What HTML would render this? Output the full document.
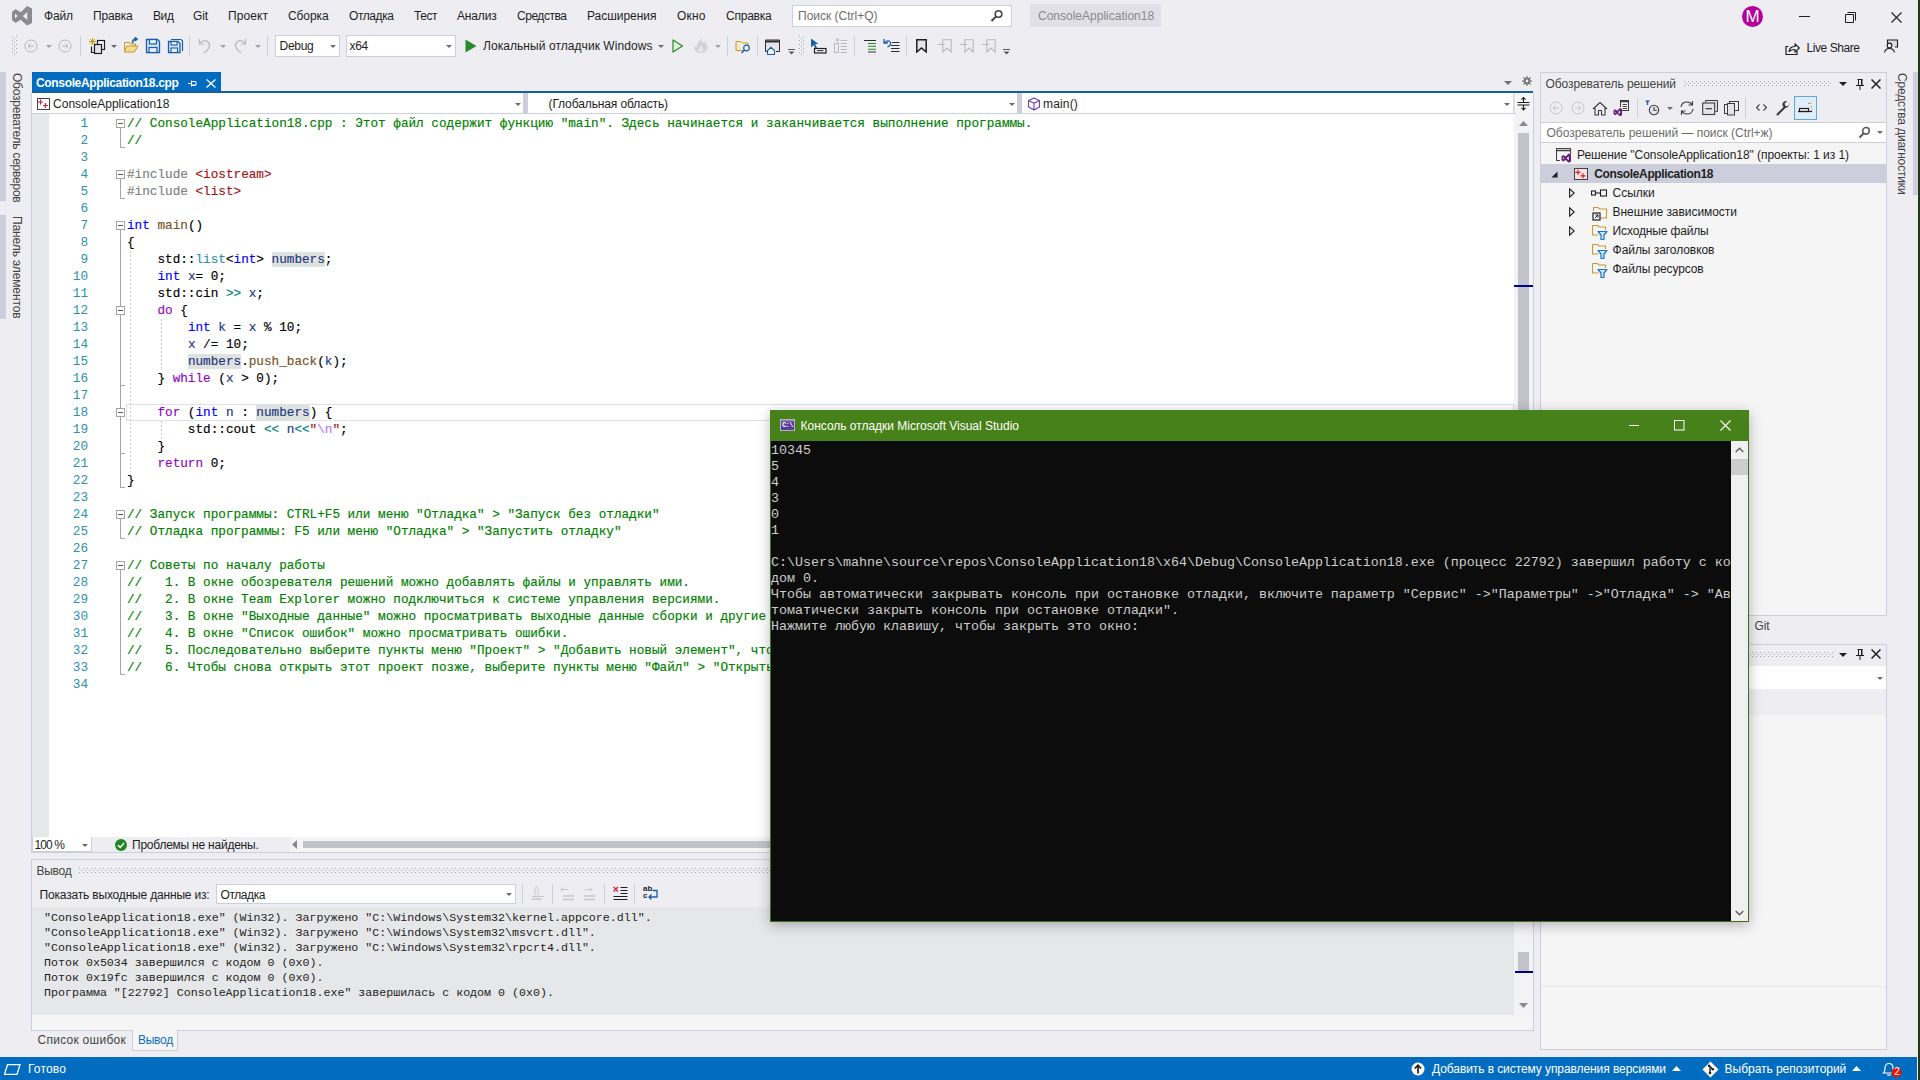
<!DOCTYPE html><html lang="ru"><head><meta charset="utf-8"><title>ConsoleApplication18 - Microsoft Visual Studio</title><style>
*{box-sizing:border-box}
html,body{margin:0;padding:0}
body{width:1920px;height:1080px;overflow:hidden;background:#eeeef2;position:relative;
 font:12px "Liberation Sans",sans-serif;color:#1e1e1e}
.a{position:absolute}
.t{position:absolute;white-space:pre;line-height:16px;height:16px}
.mono{font-family:"Liberation Mono",monospace}
.code{position:absolute;left:127px;white-space:pre;font:12.7px/17px "Liberation Mono",monospace;height:17px;color:#000;letter-spacing:-0.006px;-webkit-text-stroke:0.16px currentColor}
.ln{position:absolute;left:40px;width:48px;text-align:right;font:12.7px/17px "Liberation Mono",monospace;height:17px;color:#2b91af}
.c{color:#008000}.k{color:#0000ff}.p{color:#8f08c4}.s{color:#a31515}.g{color:#808080}.f{color:#74531f}.ty{color:#2b91af}.v{color:#1f377f}.e{color:#b776fb}.op{color:#008080}
.hl{background:#dfe3df}
.out{position:absolute;left:44px;white-space:pre;font:11.65px/15px "Liberation Mono",monospace;height:15px;color:#1e1e1e}
.con{position:absolute;left:771px;white-space:pre;font:13.33px/16px "Liberation Mono",monospace;height:16px;color:#cccccc}
.vt{position:absolute;writing-mode:vertical-rl;white-space:pre;font-size:12px;line-height:14px;color:#444}
</style></head><body>
<div class="t" style="left:44px;top:8px;color:#1e1e1e;letter-spacing:-0.129px;">Файл</div>
<div class="t" style="left:93px;top:8px;color:#1e1e1e;letter-spacing:-0.174px;">Правка</div>
<div class="t" style="left:153px;top:8px;color:#1e1e1e;letter-spacing:-0.406px;">Вид</div>
<div class="t" style="left:193px;top:8px;color:#1e1e1e;letter-spacing:-0.115px;">Git</div>
<div class="t" style="left:228px;top:8px;color:#1e1e1e;letter-spacing:0.078px;">Проект</div>
<div class="t" style="left:288px;top:8px;color:#1e1e1e;letter-spacing:-0.096px;">Сборка</div>
<div class="t" style="left:349px;top:8px;color:#1e1e1e;letter-spacing:-0.420px;">Отладка</div>
<div class="t" style="left:414px;top:8px;color:#1e1e1e;letter-spacing:-0.457px;">Тест</div>
<div class="t" style="left:457px;top:8px;color:#1e1e1e;letter-spacing:-0.169px;">Анализ</div>
<div class="t" style="left:517px;top:8px;color:#1e1e1e;letter-spacing:-0.459px;">Средства</div>
<div class="t" style="left:587px;top:8px;color:#1e1e1e;letter-spacing:-0.030px;">Расширения</div>
<div class="t" style="left:677px;top:8px;color:#1e1e1e;letter-spacing:0.152px;">Окно</div>
<div class="t" style="left:726px;top:8px;color:#1e1e1e;letter-spacing:-0.225px;">Справка</div>
<div class="a" style="left:792px;top:5px;width:220px;height:22px;background:#ffffff;border:1px solid #cccedb;"></div>
<div class="t" style="left:798px;top:8px;color:#6d6d6d;">Поиск (Ctrl+Q)</div>
<div class="a" style="left:1030px;top:4px;width:131px;height:23px;background:#e0e0e6;"></div>
<div class="t" style="left:1038px;top:8px;color:#8a8a8a;">ConsoleApplication18</div>
<div class="a" style="left:1742px;top:5.500px;width:21px;height:21px;border-radius:11px;background:#b4009e;color:#fff;font-size:17px;line-height:22px;text-align:center">M</div>
<div class="t" style="left:1806.5px;top:40px;color:#1e1e1e;letter-spacing:-0.438px;">Live Share</div>
<svg class="a" style="left:12px;top:6px" width="20" height="20" viewBox="0 0 20 20"><path fill-rule="evenodd" d="M0 6L3.500 3 8.750 6.200 15 0 20 2.500V17L15 19.500 8.750 13.800 3.500 17 0 14zM3 7.600V12.400L5.600 10zM15.300 6V14L10.800 10z" fill="#8b8b92"/></svg>
<svg class="a" style="left:1799px;top:16px" width="11" height="1" viewBox="0 0 11 1"><rect width="11" height="1" fill="#1e1e1e"/></svg>
<svg class="a" style="left:1845px;top:12px" width="11" height="11" viewBox="0 0 11 11"><path d="M2.5 0.5h8v8M0.5 2.5h8v8h-8z" fill="none" stroke="#1e1e1e" stroke-width="1"/></svg>
<svg class="a" style="left:1891px;top:12px" width="11" height="11" viewBox="0 0 11 11"><path d="M0.5 0.5l10 10M10.5 0.5l-10 10" stroke="#1e1e1e" stroke-width="1.1" fill="none"/></svg>
<svg class="a" style="left:990px;top:9px" width="14" height="14" viewBox="0 0 14 14"><circle cx="8.5" cy="5" r="3.3" fill="none" stroke="#424242" stroke-width="1.6"/><path d="M6 7.6L1.5 12" stroke="#424242" stroke-width="2"/></svg>
<svg class="a" style="left:1785px;top:41px" width="16" height="15" viewBox="0 0 16 15"><path d="M3.5 5.5h-2.5v8h11v-3.5" fill="none" stroke="#1e1e1e" stroke-width="1.2"/><path d="M4 10.5c0.5-3.5 2.5-5 6-5v-2.7l4.3 4.2-4.3 4.2v-2.7c-2.5 0-4.500.5-6 2z" fill="none" stroke="#1e1e1e" stroke-width="1.1" stroke-linejoin="round"/></svg>
<svg class="a" style="left:1883px;top:38px" width="16" height="16" viewBox="0 0 16 16"><path d="M4.5 5.500v-3.500h10v7h-2.500" fill="#dcdce2" stroke="#1e1e1e" stroke-width="1.1"/><circle cx="6.5" cy="7.500" r="2.400" fill="#eeeef2" stroke="#1e1e1e" stroke-width="1.1"/><path d="M1.500 14.500c0.600-3 2.600-4 5-4s4.400 1 5 4" fill="none" stroke="#1e1e1e" stroke-width="1.1"/></svg>
<div class="a" style="left:12px;top:36px;width:5px;height:19px;background-image:radial-gradient(circle at 0.5px 0.5px,#a0a3b4 0.6px,transparent 0.7px),radial-gradient(circle at 0.5px 0.5px,#a0a3b4 0.6px,transparent 0.7px);background-size:4px 4px;background-position:0 0,2px 2px"></div>
<svg class="a" style="left:24px;top:38.5px" width="14" height="14" viewBox="0 0 14 14"><g transform="translate(7,7)"><circle r="6" fill="none" stroke="#b8b8c0" stroke-width="1"/><path d="M-3 0h6M-3 0l2.500-2.500M-3 0l2.500 2.500" stroke="#b8b8c0" stroke-width="1" fill="none"/></g></svg>
<svg class="a" style="left:46.0px;top:44.5px" width="6" height="4"><path d="M0 0h6l-3.0 3.0z" fill="#a0a0a8"/></svg>
<svg class="a" style="left:58px;top:38.5px" width="14" height="14" viewBox="0 0 14 14"><g transform="translate(7,7)"><circle r="6" fill="none" stroke="#b8b8c0" stroke-width="1"/><path d="M3 0h-6M3 0l-2.500-2.500M3 0l-2.500 2.500" stroke="#b8b8c0" stroke-width="1" fill="none"/></g></svg>
<div class="a" style="left:80px;top:36px;width:1px;height:20px;background:#cccedb;"></div>
<svg class="a" style="left:88px;top:37px" width="18" height="18" viewBox="0 0 18 18"><path d="M4.500 1v7M1 4.500h7M2 2l5 5M7 2l-5 5" stroke="#c9a41c" stroke-width="1"/><path d="M3.500 9.500v6h4" fill="none" stroke="#1e1e1e" stroke-width="1.200"/><rect x="9.500" y="3.500" width="7" height="9" fill="#f5f5f5" stroke="#1e1e1e" stroke-width="1.200"/><rect x="6.500" y="7.500" width="7" height="9" fill="#e4e4ea" stroke="#1e1e1e" stroke-width="1.200"/></svg>
<svg class="a" style="left:111.0px;top:44.5px" width="6" height="4"><path d="M0 0h6l-3.0 3.0z" fill="#6b6b6b"/></svg>
<svg class="a" style="left:123px;top:37px" width="17" height="17" viewBox="0 0 17 17"><path d="M1.500 5.500h5l1.500 1.500h4.500v2" fill="#f3dc9a" stroke="#c79a2f" stroke-width="1"/><path d="M1.500 5.500v9.500h10l3.500-6h-11l-2.500 5" fill="#f3dc9a" stroke="#c79a2f" stroke-width="1"/><path d="M9.500 6c0-3 1.500-4 4-4M11.500 0.500l2.500 1.500-2 2" fill="none" stroke="#1a5fa8" stroke-width="1.600"/></svg>
<svg class="a" style="left:145px;top:38px" width="16" height="16" viewBox="0 0 16 16"><path d="M1.500 1.500h11l2 2v11h-13z" fill="#cfe6fb" stroke="#1a5fa8" stroke-width="1.300"/><rect x="4.500" y="1.500" width="7" height="4.500" fill="#eeeef2" stroke="#1a5fa8" stroke-width="1.200"/><rect x="4" y="9.500" width="8" height="5" fill="#eeeef2" stroke="#1a5fa8" stroke-width="1.200"/></svg>
<svg class="a" style="left:167px;top:38px" width="17" height="16" viewBox="0 0 17 16"><path d="M4 1.500h10l1.500 1.500v10" fill="none" stroke="#1a5fa8" stroke-width="1.200"/><path d="M1.500 3.500h9.500l2 2v9h-11.500z" fill="#cfe6fb" stroke="#1a5fa8" stroke-width="1.300"/><rect x="4" y="3.500" width="6" height="3.500" fill="#eeeef2" stroke="#1a5fa8" stroke-width="1.100"/><rect x="4" y="10" width="6.500" height="4.500" fill="#eeeef2" stroke="#1a5fa8" stroke-width="1.100"/></svg>
<div class="a" style="left:189px;top:36px;width:1px;height:20px;background:#cccedb;"></div>
<svg class="a" style="left:198px;top:38px" width="14" height="16" viewBox="0 0 14 16"><path d="M1.500 1v5h5" fill="none" stroke="#b8b8c0" stroke-width="1.200"/><path d="M1.500 6c2-3.500 6.500-4.500 9-1.500s0.500 7-4.500 10.500" fill="none" stroke="#b8b8c0" stroke-width="1.200"/></svg>
<svg class="a" style="left:220.0px;top:44.5px" width="6" height="4"><path d="M0 0h6l-3.0 3.0z" fill="#a0a0a8"/></svg>
<svg class="a" style="left:233px;top:38px" width="14" height="16" viewBox="0 0 14 16"><path d="M12.500 1v5h-5" fill="none" stroke="#b8b8c0" stroke-width="1.200"/><path d="M12.500 6c-2-3.500-6.500-4.500-9-1.500s-0.500 7 4.500 10.500" fill="none" stroke="#b8b8c0" stroke-width="1.200"/></svg>
<svg class="a" style="left:255.0px;top:44.5px" width="6" height="4"><path d="M0 0h6l-3.0 3.0z" fill="#a0a0a8"/></svg>
<div class="a" style="left:267px;top:36px;width:1px;height:20px;background:#cccedb;"></div>
<div class="a" style="left:275px;top:35px;width:65px;height:22px;background:#ffffff;border:1px solid #cccedb;"></div>
<div class="t" style="left:279.5px;top:38px;letter-spacing:-0.275px;">Debug</div>
<svg class="a" style="left:330.0px;top:44.5px" width="6" height="4"><path d="M0 0h6l-3.0 3.0z" fill="#6b6b6b"/></svg>
<div class="a" style="left:346px;top:35px;width:110px;height:22px;background:#ffffff;border:1px solid #cccedb;"></div>
<div class="t" style="left:349.5px;top:38px;letter-spacing:-0.286px;">x64</div>
<svg class="a" style="left:446.0px;top:44.5px" width="6" height="4"><path d="M0 0h6l-3.0 3.0z" fill="#6b6b6b"/></svg>
<svg class="a" style="left:465px;top:39px" width="12" height="14" viewBox="0 0 12 14"><path d="M0.500 0.500v13l11-6.500z" fill="#2a8a2a"/></svg>
<div class="t" style="left:483px;top:38px;letter-spacing:0.064px;">Локальный отладчик Windows</div>
<svg class="a" style="left:658.0px;top:44.5px" width="6" height="4"><path d="M0 0h6l-3.0 3.0z" fill="#6b6b6b"/></svg>
<svg class="a" style="left:672px;top:39px" width="12" height="14" viewBox="0 0 12 14"><path d="M1 1v12l9.500-6z" fill="#e2f0e0" stroke="#2a8a2a" stroke-width="1.200" stroke-linejoin="round"/></svg>
<svg class="a" style="left:693px;top:37px" width="17" height="17" viewBox="0 0 17 17"><path d="M7.500 16c-4.500 0-7-3.500-5.500-7.500 0.500 1.200 1 1.800 2 2-0.800-4 1.500-6.500 5-9-0.500 2.500 0.500 3.500 1.500 4.800 0.300-1 1-1.800 2.200-2.300-0.500 2 0.800 3.200 1.500 5 1.300 3.500-1.200 7-6.700 7z" fill="#d2d2d9"/><path d="M7.800 15c-2 0-3.300-1.500-2.800-3.300 0.500 0.500 0.800 0.700 1.300 0.700-0.300-2 0.700-3.200 2.300-4.400-0.200 1.500 0.500 2.200 1.200 3.200 1 1.500 0.300 3.800-2 3.800z" fill="#e6e6ec"/></svg>
<svg class="a" style="left:715.0px;top:44.5px" width="6" height="4"><path d="M0 0h6l-3.0 3.0z" fill="#a0a0a8"/></svg>
<div class="a" style="left:727px;top:36px;width:1px;height:20px;background:#cccedb;"></div>
<svg class="a" style="left:735px;top:39px" width="17" height="15" viewBox="0 0 17 15"><path d="M1 2.500h5l1.500 1.500h5.500v4M1 2.500v9h7" fill="#f7e7b8" stroke="#c79a2f" stroke-width="1"/><circle cx="11.500" cy="9" r="2.800" fill="#eef6ff" stroke="#1a5fa8" stroke-width="1.200"/><path d="M9.500 11l-3 3" stroke="#1a5fa8" stroke-width="1.500"/></svg>
<div class="a" style="left:757px;top:36px;width:1px;height:20px;background:#cccedb;"></div>
<svg class="a" style="left:765px;top:39px" width="16" height="16" viewBox="0 0 16 16"><path d="M4 12.500h-3.500v-11.500h14v11.500h-3.500" fill="#e4e4ea" stroke="#2e2e2e" stroke-width="1"/><path d="M0.500 2.500h14" stroke="#2e2e2e" stroke-width="2"/><path d="M2.500 11.500l3.500-3.200 3.500 3.200v4h-7z" fill="#eef6ff" stroke="#1a5fa8" stroke-width="1.100"/></svg>
<svg class="a" style="left:788px;top:49px" width="7" height="6" viewBox="0 0 7 6"><rect x="0" y="0" width="7" height="1" fill="#5a5a5a"/><path d="M0.500 2.500h6l-3 3z" fill="#5a5a5a"/></svg>
<div class="a" style="left:799px;top:36px;width:5px;height:19px;background-image:radial-gradient(circle at 0.5px 0.5px,#a0a3b4 0.6px,transparent 0.7px),radial-gradient(circle at 0.5px 0.5px,#a0a3b4 0.6px,transparent 0.7px);background-size:4px 4px;background-position:0 0,2px 2px"></div>
<svg class="a" style="left:810px;top:38px" width="17" height="16" viewBox="0 0 17 16"><path d="M1 0.500v9l2.500-2.500 2 3.500 1.500-1-2-3.500h3.500z" fill="#1a5fa8"/><rect x="4.500" y="10.500" width="11.500" height="4.500" fill="#f5f5f5" stroke="#1e1e1e" stroke-width="1.200"/><path d="M7 12.700h6.500" stroke="#1e1e1e" stroke-width="1"/></svg>
<svg class="a" style="left:833px;top:38px" width="15" height="16" viewBox="0 0 15 16"><path d="M4.500 0v4M2.500 2h4" stroke="#b8b8c0" stroke-width="1"/><rect x="1.500" y="5.500" width="4" height="9" fill="none" stroke="#b8b8c0" stroke-width="1"/><path d="M7.500 2.500h6.500M7.500 5.500h6.500M7.500 8.500h6.500M7.500 11.500h6.500M7.500 14.500h6.500" stroke="#b8b8c0" stroke-width="1"/></svg>
<div class="a" style="left:854px;top:36px;width:1px;height:20px;background:#cccedb;"></div>
<svg class="a" style="left:863px;top:39px" width="14" height="14" viewBox="0 0 14 14"><path d="M1 1.500h12M5 13h8" stroke="#2e2e2e" stroke-width="1"/><path d="M5 4.500h8M5 7.300h8M5 10.200h8" stroke="#2a8a2a" stroke-width="1.100"/></svg>
<svg class="a" style="left:883px;top:38px" width="17" height="16" viewBox="0 0 17 16"><path d="M1 1v4h4" fill="none" stroke="#1a5fa8" stroke-width="1.300"/><path d="M1.500 5c1.500-2.500 5-3 6-0.500s-1 3.500-3 4.500" fill="none" stroke="#1a5fa8" stroke-width="1.300"/><path d="M9 4.500h7.500M8 7.500h8.500M8 10.500h8.500M8 13.500h8.500" stroke="#2e2e2e" stroke-width="1"/></svg>
<div class="a" style="left:906px;top:36px;width:1px;height:20px;background:#cccedb;"></div>
<svg class="a" style="left:916px;top:39px" width="11" height="14" viewBox="0 0 11 14"><path d="M0.800 0.800h9.400v12.200l-4.700-4-4.700 4z" fill="#e4e4ea" stroke="#1e1e1e" stroke-width="1.500"/></svg>
<svg class="a" style="left:938px;top:39px" width="15" height="14" viewBox="0 0 15 14"><path d="M4.800 0.800h8.400v12.200l-4.200-4-4.200 4z" fill="none" stroke="#b8b8c0" stroke-width="1.100"/><path d="M0 5.500h7" stroke="#b8b8c0" stroke-width="1"/></svg>
<svg class="a" style="left:960px;top:39px" width="15" height="14" viewBox="0 0 15 14"><path d="M4.800 0.800h8.400v12.200l-4.200-4-4.200 4z" fill="none" stroke="#b8b8c0" stroke-width="1.100"/><path d="M0 5.500h7" stroke="#b8b8c0" stroke-width="1"/></svg>
<svg class="a" style="left:982px;top:39px" width="15" height="14" viewBox="0 0 15 14"><path d="M4.800 0.800h8.400v12.200l-4.200-4-4.200 4z" fill="none" stroke="#b8b8c0" stroke-width="1.100"/><path d="M0 5.500h7" stroke="#b8b8c0" stroke-width="1"/></svg>
<svg class="a" style="left:1003px;top:49px" width="7" height="6" viewBox="0 0 7 6"><rect x="0" y="0" width="7" height="1" fill="#5a5a5a"/><path d="M0.500 2.500h6l-3 3z" fill="#5a5a5a"/></svg>
<div class="a" style="left:0px;top:72px;width:5.5px;height:129px;background:#cccedb;"></div>
<div class="a" style="left:0px;top:215px;width:5.5px;height:104px;background:#cccedb;"></div>
<div class="vt" style="left:10px;top:73px;color:#444;letter-spacing:-0.237px">Обозреватель серверов</div>
<div class="vt" style="left:10px;top:215.5px;color:#444;letter-spacing:-0.112px">Панель элементов</div>
<div class="a" style="left:32px;top:72px;width:189px;height:19px;background:#026dc0;"></div>
<div class="a" style="left:32px;top:91px;width:1501px;height:2px;background:#15609c;"></div>
<div class="t" style="left:36px;top:75px;color:#ffffff;font-weight:bold;letter-spacing:-0.341px;">ConsoleApplication18.cpp</div>
<svg class="a" style="left:188px;top:80px" width="9" height="7" viewBox="0 0 9 7"><path d="M0 3.500h3M3.500 0.500v6M3.500 1.500h4.500v3.500h-4.500M3.500 5.500h4.500" fill="none" stroke="#fff" stroke-width="1"/></svg>
<svg class="a" style="left:206px;top:79px" width="10" height="9" viewBox="0 0 10 9"><path d="M0.500 0.500l9 8M9.500 0.500l-9 8" stroke="#fff" stroke-width="1.300" fill="none"/></svg>
<svg class="a" style="left:1504.0px;top:80.5px" width="8" height="4"><path d="M0 0h8l-4.0 4.0z" fill="#717171"/></svg>
<svg class="a" style="left:1522px;top:76px" width="10" height="10" viewBox="0 0 12 12"><circle cx="6" cy="6" r="3" fill="none" stroke="#717171" stroke-width="1.800"/><path d="M6 0v12M0 6h12M1.800 1.800l8.400 8.400M10.200 1.800l-8.400 8.400" stroke="#717171" stroke-width="1.500"/><circle cx="6" cy="6" r="1.700" fill="#eeeef2"/></svg>
<div class="a" style="left:32px;top:93px;width:1501px;height:21px;background:#ffffff;border:1px solid #cccedb;border-top:none;border-left:none;border-right:none;"></div>
<div class="a" style="left:523px;top:93px;width:5px;height:20px;background:#cccedb;"></div>
<div class="a" style="left:1017px;top:93px;width:5px;height:20px;background:#cccedb;"></div>
<div class="a" style="left:1513px;top:93px;width:2px;height:20px;background:#dcdde6;"></div>
<div class="a" style="left:1516px;top:93px;width:17px;height:21px;background:#f5f5f5;"></div>
<svg class="a" style="left:37px;top:98px" width="13" height="12" viewBox="0 0 13 12"><rect x="0.500" y="0.500" width="12" height="11" fill="#fff" stroke="#424242"/><path d="M3.500 1.500v5M1 4h5M8.500 5v5M6 7.500h5" stroke="#c4262e" stroke-width="1.200"/></svg>
<div class="t" style="left:53px;top:96px;letter-spacing:0.020px;">ConsoleApplication18</div>
<div class="t" style="left:548.5px;top:96px;letter-spacing:-0.111px;">(Глобальная область)</div>
<svg class="a" style="left:1027px;top:97px" width="14" height="14" viewBox="0 0 14 14"><path d="M7 1l5.500 2.500v6.500l-5.500 3-5.500-3v-6.500zM1.500 3.500l5.500 2.800 5.500-2.800M7 6.300v6.700" fill="none" stroke="#6b3fa0" stroke-width="1.100" stroke-linejoin="round"/></svg>
<div class="t" style="left:1043px;top:96px;letter-spacing:0.164px;">main()</div>
<svg class="a" style="left:515.0px;top:102.5px" width="6" height="4"><path d="M0 0h6l-3.0 3.0z" fill="#6b6b6b"/></svg>
<svg class="a" style="left:1009.0px;top:102.5px" width="6" height="4"><path d="M0 0h6l-3.0 3.0z" fill="#6b6b6b"/></svg>
<svg class="a" style="left:1504.0px;top:102.5px" width="6" height="4"><path d="M0 0h6l-3.0 3.0z" fill="#6b6b6b"/></svg>
<svg class="a" style="left:1517px;top:97px" width="13" height="14" viewBox="0 0 13 14"><path d="M0.500 5.500h12M0.500 8h12" stroke="#1e1e1e" stroke-width="1.100"/><path d="M6.500 0.500v5M6.500 8v5M4.500 2.700l2-2.200 2 2.200M4.500 10.800l2 2.200 2-2.200" fill="none" stroke="#1e1e1e" stroke-width="1.100"/></svg>
<div class="a" style="left:31px;top:93px;width:1px;height:744px;background:#cccedb;"></div>
<div class="a" style="left:1533px;top:93px;width:1px;height:744px;background:#cccedb;"></div>
<div class="a" style="left:32px;top:114px;width:1483px;height:723px;background:#ffffff;"></div>
<div class="a" style="left:32px;top:114px;width:17px;height:723px;background:#e6e7e8;"></div>
<div class="a" style="left:1514px;top:114px;width:19px;height:723px;background:#f3f3f6;"></div>
<div class="a" style="left:1518px;top:133px;width:11px;height:690px;background:#c2c3c9;"></div>
<svg class="a" style="left:1519px;top:121px" width="9" height="5" viewBox="0 0 9 5"><path d="M0 5l4.500-5 4.500 5z" fill="#868999"/></svg>
<div class="a" style="left:1514px;top:285px;width:19px;height:2px;background:#00008b;"></div>
<div class="a" style="left:126px;top:404px;width:1388px;height:17px;border:1px solid #dfdfe8;"></div>
<div class="a" style="left:32px;top:114px;width:1482px;height:723px;overflow:hidden"><div class="a" style="left:-32px;top:-114px;width:1920px;height:1080px">
<div class="ln" style="top:115px">1</div>
<div class="code" style="top:115px"><span class="c">// ConsoleApplication18.cpp : Этот файл содержит функцию "main". Здесь начинается и заканчивается выполнение программы.</span></div>
<div class="ln" style="top:132px">2</div>
<div class="code" style="top:132px"><span class="c">//</span></div>
<div class="ln" style="top:149px">3</div>
<div class="ln" style="top:166px">4</div>
<div class="code" style="top:166px"><span class="g">#include </span><span class="s">&lt;iostream&gt;</span></div>
<div class="ln" style="top:183px">5</div>
<div class="code" style="top:183px"><span class="g">#include </span><span class="s">&lt;list&gt;</span></div>
<div class="ln" style="top:200px">6</div>
<div class="ln" style="top:217px">7</div>
<div class="code" style="top:217px"><span class="k">int</span> <span class="f">main</span>()</div>
<div class="ln" style="top:234px">8</div>
<div class="code" style="top:234px">{</div>
<div class="ln" style="top:251px">9</div>
<div class="code" style="top:251px">    std::<span class="ty">list</span><<span class="k">int</span>> <span class="v hl">numbers</span>;</div>
<div class="ln" style="top:268px">10</div>
<div class="code" style="top:268px">    <span class="k">int</span> <span class="v">x</span>= 0;</div>
<div class="ln" style="top:285px">11</div>
<div class="code" style="top:285px">    std::cin <span class="op">&gt;&gt;</span> <span class="v">x</span>;</div>
<div class="ln" style="top:302px">12</div>
<div class="code" style="top:302px">    <span class="p">do</span> {</div>
<div class="ln" style="top:319px">13</div>
<div class="code" style="top:319px">        <span class="k">int</span> <span class="v">k</span> = <span class="v">x</span> % 10;</div>
<div class="ln" style="top:336px">14</div>
<div class="code" style="top:336px">        <span class="v">x</span> /= 10;</div>
<div class="ln" style="top:353px">15</div>
<div class="code" style="top:353px">        <span class="v hl">numbers</span>.<span class="f">push_back</span>(<span class="v">k</span>);</div>
<div class="ln" style="top:370px">16</div>
<div class="code" style="top:370px">    } <span class="p">while</span> (<span class="v">x</span> > 0);</div>
<div class="ln" style="top:387px">17</div>
<div class="ln" style="top:404px">18</div>
<div class="code" style="top:404px">    <span class="p">for</span> (<span class="k">int</span> <span class="v">n</span> : <span class="v hl">numbers</span>) {</div>
<div class="ln" style="top:421px">19</div>
<div class="code" style="top:421px">        std::cout <span class="op">&lt;&lt;</span> <span class="v">n</span><span class="op">&lt;&lt;</span><span class="s">"</span><span class="e">\n</span><span class="s">"</span>;</div>
<div class="ln" style="top:438px">20</div>
<div class="code" style="top:438px">    }</div>
<div class="ln" style="top:455px">21</div>
<div class="code" style="top:455px">    <span class="p">return</span> 0;</div>
<div class="ln" style="top:472px">22</div>
<div class="code" style="top:472px">}</div>
<div class="ln" style="top:489px">23</div>
<div class="ln" style="top:506px">24</div>
<div class="code" style="top:506px"><span class="c">// Запуск программы: CTRL+F5 или меню "Отладка" &gt; "Запуск без отладки"</span></div>
<div class="ln" style="top:523px">25</div>
<div class="code" style="top:523px"><span class="c">// Отладка программы: F5 или меню "Отладка" &gt; "Запустить отладку"</span></div>
<div class="ln" style="top:540px">26</div>
<div class="ln" style="top:557px">27</div>
<div class="code" style="top:557px"><span class="c">// Советы по началу работы </span></div>
<div class="ln" style="top:574px">28</div>
<div class="code" style="top:574px"><span class="c">//   1. В окне обозревателя решений можно добавлять файлы и управлять ими.</span></div>
<div class="ln" style="top:591px">29</div>
<div class="code" style="top:591px"><span class="c">//   2. В окне Team Explorer можно подключиться к системе управления версиями.</span></div>
<div class="ln" style="top:608px">30</div>
<div class="code" style="top:608px"><span class="c">//   3. В окне "Выходные данные" можно просматривать выходные данные сборки и другие сообщения.</span></div>
<div class="ln" style="top:625px">31</div>
<div class="code" style="top:625px"><span class="c">//   4. В окне "Список ошибок" можно просматривать ошибки.</span></div>
<div class="ln" style="top:642px">32</div>
<div class="code" style="top:642px"><span class="c">//   5. Последовательно выберите пункты меню "Проект" &gt; "Добавить новый элемент", чтобы создать файлы кода, или "Проект" &gt; "Добавить существующий элемент", чтобы добавить в проект существующие файлы кода.</span></div>
<div class="ln" style="top:659px">33</div>
<div class="code" style="top:659px"><span class="c">//   6. Чтобы снова открыть этот проект позже, выберите пункты меню "Файл" &gt; "Открыть" &gt; "Проект" и выберите SLN-файл.</span></div>
<div class="ln" style="top:676px">34</div>
<div class="a" style="left:116px;top:119px;width:9px;height:9px;border:1px solid #a5a5a5;background:#fff"></div>
<div class="a" style="left:118px;top:123px;width:5px;height:1px;background:#555"></div>
<div class="a" style="left:116px;top:170px;width:9px;height:9px;border:1px solid #a5a5a5;background:#fff"></div>
<div class="a" style="left:118px;top:174px;width:5px;height:1px;background:#555"></div>
<div class="a" style="left:116px;top:221px;width:9px;height:9px;border:1px solid #a5a5a5;background:#fff"></div>
<div class="a" style="left:118px;top:225px;width:5px;height:1px;background:#555"></div>
<div class="a" style="left:116px;top:306px;width:9px;height:9px;border:1px solid #a5a5a5;background:#fff"></div>
<div class="a" style="left:118px;top:310px;width:5px;height:1px;background:#555"></div>
<div class="a" style="left:116px;top:408px;width:9px;height:9px;border:1px solid #a5a5a5;background:#fff"></div>
<div class="a" style="left:118px;top:412px;width:5px;height:1px;background:#555"></div>
<div class="a" style="left:116px;top:510px;width:9px;height:9px;border:1px solid #a5a5a5;background:#fff"></div>
<div class="a" style="left:118px;top:514px;width:5px;height:1px;background:#555"></div>
<div class="a" style="left:116px;top:561px;width:9px;height:9px;border:1px solid #a5a5a5;background:#fff"></div>
<div class="a" style="left:118px;top:565px;width:5px;height:1px;background:#555"></div>
<div class="a" style="left:120px;top:128px;width:1px;height:19px;background:#a5a5a5"></div>
<div class="a" style="left:120px;top:147px;width:5px;height:1px;background:#a5a5a5"></div>
<div class="a" style="left:120px;top:179px;width:1px;height:19px;background:#a5a5a5"></div>
<div class="a" style="left:120px;top:198px;width:5px;height:1px;background:#a5a5a5"></div>
<div class="a" style="left:120px;top:519px;width:1px;height:19px;background:#a5a5a5"></div>
<div class="a" style="left:120px;top:538px;width:5px;height:1px;background:#a5a5a5"></div>
<div class="a" style="left:120px;top:570px;width:1px;height:104px;background:#a5a5a5"></div>
<div class="a" style="left:120px;top:674px;width:5px;height:1px;background:#a5a5a5"></div>
<div class="a" style="left:120px;top:230px;width:1px;height:76px;background:#a5a5a5"></div>
<div class="a" style="left:120px;top:315px;width:1px;height:93px;background:#a5a5a5"></div>
<div class="a" style="left:120px;top:417px;width:1px;height:70px;background:#a5a5a5"></div>
<div class="a" style="left:120px;top:385px;width:5px;height:1px;background:#a5a5a5"></div>
<div class="a" style="left:120px;top:453px;width:5px;height:1px;background:#a5a5a5"></div>
<div class="a" style="left:120px;top:487px;width:5px;height:1px;background:#a5a5a5"></div>
<div class="a" style="left:130px;top:251px;width:1px;height:221px;background:repeating-linear-gradient(#c8c8c8 0 2px,transparent 2px 4px)"></div>
<div class="a" style="left:161px;top:319px;width:1px;height:51px;background:repeating-linear-gradient(#c8c8c8 0 2px,transparent 2px 4px)"></div>
<div class="a" style="left:161px;top:421px;width:1px;height:17px;background:repeating-linear-gradient(#c8c8c8 0 2px,transparent 2px 4px)"></div>
</div></div>
<div class="a" style="left:31px;top:837px;width:1503px;height:16px;background:#eeeef2;border:1px solid #cccedb;border-top:none;"></div>
<div class="a" style="left:290px;top:837px;width:1243px;height:15px;background:#f5f5f5;"></div>
<div class="a" style="left:32px;top:837px;width:60px;height:15px;background:#ffffff;border:1px solid #cccedb;border-top:none;"></div>
<div class="t" style="left:34.5px;top:837px;letter-spacing:-0.906px;">100 %</div>
<svg class="a" style="left:82.0px;top:843.5px" width="6" height="4"><path d="M0 0h6l-3.0 3.0z" fill="#6b6b6b"/></svg>
<div class="t" style="left:132px;top:837px;letter-spacing:-0.230px;">Проблемы не найдены.</div>
<svg class="a" style="left:115px;top:839px" width="12" height="12" viewBox="0 0 12 12"><circle cx="6" cy="6" r="6" fill="#1f8a1f"/><path d="M3 6.200l2.200 2.200 3.800-4.300" fill="none" stroke="#fff" stroke-width="1.500"/></svg>
<div class="a" style="left:303px;top:841px;width:500px;height:7px;background:#c2c3c9;"></div>
<svg class="a" style="left:292px;top:840px" width="5" height="9" viewBox="0 0 5 9"><path d="M5 0v9l-5-4.500z" fill="#868999"/></svg>
<div class="a" style="left:31px;top:859px;width:1503px;height:172px;background:#f5f5f5;border:1px solid #cccedb;"></div>
<div class="a" style="left:32px;top:860px;width:1501px;height:47px;background:#eeeef2;"></div>
<div class="t" style="left:36.5px;top:863px;color:#444;letter-spacing:-0.256px;">Вывод</div>
<div class="a" style="left:79px;top:868px;width:1410px;height:5px;background-image:radial-gradient(circle at 0.5px 0.5px,#a0a3b4 0.6px,transparent 0.7px),radial-gradient(circle at 0.5px 0.5px,#a0a3b4 0.6px,transparent 0.7px);background-size:4px 4px;background-position:0 0,2px 2px"></div>
<div class="t" style="left:39.5px;top:887px;letter-spacing:-0.178px;">Показать выходные данные из:</div>
<div class="a" style="left:216px;top:884px;width:300px;height:20px;background:#ffffff;border:1px solid #cccedb;"></div>
<div class="t" style="left:220.5px;top:887px;letter-spacing:-0.420px;">Отладка</div>
<svg class="a" style="left:506.0px;top:893.0px" width="6" height="4"><path d="M0 0h6l-3.0 3.0z" fill="#6b6b6b"/></svg>
<svg class="a" style="left:1487.0px;top:869.0px" width="8" height="4"><path d="M0 0h8l-4.0 4.0z" fill="#1e1e1e"/></svg>
<svg class="a" style="left:1504px;top:865.5px" width="8" height="11" viewBox="0 0 8 11"><path d="M1.500 0.500h5M2.500 0.500v6M5.500 0.500v6M6 0.500v6M0 6.500h8M4 7v4" fill="none" stroke="#1e1e1e" stroke-width="1"/></svg>
<svg class="a" style="left:1519px;top:865.5px" width="10" height="10" viewBox="0 0 10 10"><path d="M0.500 0.500l9 9M9.500 0.500l-9 9" stroke="#1e1e1e" stroke-width="1.500" fill="none"/></svg>
<div class="a" style="left:522px;top:884px;width:1px;height:20px;background:#cccedb;"></div>
<div class="a" style="left:552px;top:884px;width:1px;height:20px;background:#cccedb;"></div>
<div class="a" style="left:604px;top:884px;width:1px;height:20px;background:#cccedb;"></div>
<div class="a" style="left:634px;top:884px;width:1px;height:20px;background:#cccedb;"></div>
<svg class="a" style="left:531px;top:886px" width="14" height="15" viewBox="0 0 14 15"><path d="M4 9v-6.500c0-2 3-2 3 0v6.500M1 10.500h12" fill="none" stroke="#c6c6cc" stroke-width="1"/><path d="M0.500 13h10" stroke="#c6c6cc" stroke-width="1.600"/></svg>
<svg class="a" style="left:560px;top:887px" width="15" height="14" viewBox="0 0 15 14"><path d="M1 2.500h7M1 2.500l2-2M1 2.500l2 2" fill="none" stroke="#c6c6cc" stroke-width="1"/><path d="M3 9h11M3 12.500h11" stroke="#c6c6cc" stroke-width="1.600"/></svg>
<svg class="a" style="left:581px;top:887px" width="15" height="14" viewBox="0 0 15 14"><path d="M4 2.500h7M11 2.500l-2-2M11 2.500l-2 2" fill="none" stroke="#c6c6cc" stroke-width="1"/><path d="M3 9h11M3 12.500h11" stroke="#c6c6cc" stroke-width="1.600"/></svg>
<svg class="a" style="left:613px;top:886px" width="15" height="15" viewBox="0 0 15 15"><path d="M0.500 1l4.500 4.500M5 1l-4.500 4.500" stroke="#e0263a" stroke-width="1.400"/><path d="M7.500 1.500h7M7.500 4.500h7M7.500 7.500h7M0.500 10.500h14M0.500 13.500h14" stroke="#1e1e1e" stroke-width="1.200"/></svg>
<svg class="a" style="left:643px;top:887px" width="16" height="14" viewBox="0 0 16 14"><path d="M9.500 3.500h4.500v6.500h-8M8.500 7.500l-2.500 2.500 2.500 2.500" fill="none" stroke="#1a5fa8" stroke-width="1.300"/></svg>
<div class="t" style="left:643px;top:885px;font:bold 8px/7px &quot;Liberation Sans&quot;,sans-serif;height:14px;white-space:pre;color:#1e1e1e">ab
c</div>
<div class="a" style="left:32px;top:907px;width:1482px;height:108px;background:#e6e7e8;"></div>
<div class="a" style="left:1514px;top:907px;width:19px;height:108px;background:#f3f3f6;"></div>
<div class="a" style="left:1518px;top:952px;width:11px;height:19px;background:#c2c3c9;"></div>
<svg class="a" style="left:1519px;top:1003px" width="9" height="5" viewBox="0 0 9 5"><path d="M0 0l4.500 5 4.500-5z" fill="#868999"/></svg>
<div class="a" style="left:1515px;top:971px;width:18px;height:2px;background:#00008b;"></div>
<div class="out" style="top:910px">"ConsoleApplication18.exe" (Win32). Загружено "C:\Windows\System32\kernel.appcore.dll".</div>
<div class="out" style="top:925px">"ConsoleApplication18.exe" (Win32). Загружено "C:\Windows\System32\msvcrt.dll".</div>
<div class="out" style="top:940px">"ConsoleApplication18.exe" (Win32). Загружено "C:\Windows\System32\rpcrt4.dll".</div>
<div class="out" style="top:955px">Поток 0x5034 завершился с кодом 0 (0x0).</div>
<div class="out" style="top:970px">Поток 0x19fc завершился с кодом 0 (0x0).</div>
<div class="out" style="top:985px">Программа "[22792] ConsoleApplication18.exe" завершилась с кодом 0 (0x0).</div>
<div class="t" style="left:37.5px;top:1032px;color:#444;letter-spacing:0.264px;">Список ошибок</div>
<div class="a" style="left:132px;top:1030px;width:46px;height:21px;background:#f5f5f5;border:1px solid #cccedb;border-top:none;"></div>
<div class="t" style="left:138px;top:1032px;color:#0e70c0;letter-spacing:-0.256px;">Вывод</div>
<div class="a" style="left:0px;top:1057px;width:1917px;height:23px;background:#026dc0;"></div>
<div class="t" style="left:28px;top:1061px;color:#ffffff;letter-spacing:0.156px;">Готово</div>
<svg class="a" style="left:4px;top:1064px" width="17" height="11" viewBox="0 0 17 11"><path d="M3.500 0.700h12.500l-3 9.600h-12.500z" fill="none" stroke="#fff" stroke-width="1.300"/></svg>
<svg class="a" style="left:1411px;top:1062px" width="14" height="14" viewBox="0 0 14 14"><circle cx="7" cy="7" r="6.500" fill="#fff"/><path d="M7 11.500v-8M3.800 6.500l3.200-3.300 3.200 3.300" fill="none" stroke="#1e1e1e" stroke-width="1.700"/></svg>
<svg class="a" style="left:1672px;top:1066px" width="9" height="5" viewBox="0 0 9 5"><path d="M0 5l4.500-5 4.500 5z" fill="#fff"/></svg>
<svg class="a" style="left:1852px;top:1066px" width="9" height="5" viewBox="0 0 9 5"><path d="M0 5l4.500-5 4.500 5z" fill="#fff"/></svg>
<svg class="a" style="left:1702px;top:1061px" width="17" height="17" viewBox="0 0 17 17"><path d="M8.500 0.500l8 8-8 8-8-8z" fill="#fff"/><path d="M7 4.500l3.500 3.500M8 6v6" stroke="#1e1e1e" stroke-width="1.300" fill="none"/><circle cx="8" cy="12" r="1.300" fill="#1e1e1e"/><circle cx="10.800" cy="8.300" r="1.300" fill="#1e1e1e"/><circle cx="7" cy="4.700" r="1.200" fill="#1e1e1e"/></svg>
<svg class="a" style="left:1881px;top:1061px" width="22" height="18" viewBox="0 0 22 18"><path d="M2.500 12c1.500-1.500 1.500-2.500 1.500-5 0-2.800 1.800-4.500 4-4.500s4 1.700 4 4.500c0 2.500 0 3.500 1.500 5z" fill="none" stroke="#fff" stroke-width="1.200"/><path d="M6.500 13.500c0.300 1 2.700 1 3 0" fill="none" stroke="#fff" stroke-width="1.200"/><circle cx="15.500" cy="11.500" r="5" fill="#e51400"/></svg>
<div class="t" style="left:1893px;top:1065px;width:8px;text-align:center;color:#fff;font-size:10px;line-height:14px;height:14px">2</div>
<div class="t" style="left:1432px;top:1061px;color:#ffffff;letter-spacing:-0.081px;">Добавить в систему управления версиями</div>
<div class="t" style="left:1724.6px;top:1061px;color:#ffffff;letter-spacing:-0.036px;">Выбрать репозиторий</div>
<div class="a" style="left:1540px;top:72px;width:347px;height:544px;background:#f5f5f5;border:1px solid #cccedb;"></div>
<div class="a" style="left:1541px;top:73px;width:345px;height:49px;background:#eeeef2;"></div>
<div class="t" style="left:1545.5px;top:76px;color:#444;letter-spacing:-0.083px;">Обозреватель решений</div>
<div class="a" style="left:1684px;top:81px;width:148px;height:5px;background-image:radial-gradient(circle at 0.5px 0.5px,#a0a3b4 0.6px,transparent 0.7px),radial-gradient(circle at 0.5px 0.5px,#a0a3b4 0.6px,transparent 0.7px);background-size:4px 4px;background-position:0 0,2px 2px"></div>
<svg class="a" style="left:1839.0px;top:82.0px" width="8" height="4"><path d="M0 0h8l-4.0 4.0z" fill="#1e1e1e"/></svg>
<svg class="a" style="left:1856px;top:78.5px" width="8" height="11" viewBox="0 0 8 11"><path d="M1.500 0.500h5M2.500 0.500v6M5.500 0.500v6M6 0.500v6M0 6.500h8M4 7v4" fill="none" stroke="#1e1e1e" stroke-width="1"/></svg>
<svg class="a" style="left:1871px;top:78.5px" width="10" height="10" viewBox="0 0 10 10"><path d="M0.500 0.500l9 9M9.500 0.500l-9 9" stroke="#1e1e1e" stroke-width="1.500" fill="none"/></svg>
<svg class="a" style="left:1548.5px;top:100.5px" width="14" height="14" viewBox="0 0 14 14"><g transform="translate(7,7)"><circle r="6" fill="none" stroke="#c4c4cc" stroke-width="1"/><path d="M-3 0h6M-3 0l2.500-2.500M-3 0l2.500 2.500" stroke="#c4c4cc" stroke-width="1" fill="none"/></g></svg>
<svg class="a" style="left:1570.5px;top:100.5px" width="14" height="14" viewBox="0 0 14 14"><g transform="translate(7,7)"><circle r="6" fill="none" stroke="#c4c4cc" stroke-width="1"/><path d="M3 0h-6M3 0l-2.500-2.500M3 0l-2.500 2.500" stroke="#c4c4cc" stroke-width="1" fill="none"/></g></svg>
<svg class="a" style="left:1592px;top:101px" width="16" height="15" viewBox="0 0 16 15"><path d="M1 8l7-6.500 7 6.500M3 6.500v7.500h3.500v-4.500h3v4.500h3.500v-7.500" fill="none" stroke="#3c3c3c" stroke-width="1.100" stroke-linejoin="round"/></svg>
<svg class="a" style="left:1613px;top:100px" width="17" height="17" viewBox="0 0 17 17"><rect x="7.500" y="0.500" width="8" height="10" fill="#f5f5f5" stroke="#3c3c3c" stroke-width="1"/><path d="M7.500 1.500h8" stroke="#3c3c3c" stroke-width="1.600"/><path d="M9.500 4.500h4.500M9.500 6.500h4.500M9.500 8.500h4.500" stroke="#3c3c3c" stroke-width="0.900"/><rect x="0" y="7" width="9" height="10" fill="#eeeef2"/><path transform="translate(0.5,8) scale(0.425)" fill-rule="evenodd" d="M0 6L3.500 3 8.750 6.200 15 0 20 2.500V17L15 19.500 8.750 13.800 3.500 17 0 14zM3 7.600V12.400L5.600 10zM15.300 6V14L10.800 10z" fill="#68217a"/></svg>
<div class="a" style="left:1637px;top:98px;width:1px;height:20px;background:#cccedb;"></div>
<svg class="a" style="left:1645px;top:100px" width="16" height="17" viewBox="0 0 16 17"><path d="M0 0.500h5l-1.800 2v2.500h-1.400v-2.500z" fill="#1a5fa8"/><circle cx="9" cy="10" r="4.700" fill="#e4e4ea" stroke="#3c3c3c" stroke-width="1.100"/><path d="M9 7v3.300h2.800" fill="none" stroke="#3c3c3c" stroke-width="1.100"/></svg>
<svg class="a" style="left:1667.0px;top:106.5px" width="6" height="4"><path d="M0 0h6l-3.0 3.0z" fill="#6b6b6b"/></svg>
<svg class="a" style="left:1679px;top:100px" width="16" height="16" viewBox="0 0 16 16"><path d="M2 7c0.500-3 3-5 6-5 2.500 0 4 1 5.500 3M13.500 1v4h-4" fill="none" stroke="#3c3c3c" stroke-width="1.150"/><path d="M14 9c-0.500 3-3 5-6 5-2.500 0-4-1-5.500-3M2.500 15v-4h4" fill="none" stroke="#3c3c3c" stroke-width="1.150"/></svg>
<svg class="a" style="left:1702px;top:100px" width="16" height="16" viewBox="0 0 16 16"><path d="M3.500 2.500v-2h12v11h-2" fill="#e4e4ea" stroke="#3c3c3c" stroke-width="1"/><rect x="0.700" y="3" width="12" height="11.500" fill="#e4e4ea" stroke="#3c3c3c" stroke-width="1.100"/><path d="M3.500 8.700h6.500" stroke="#3c3c3c" stroke-width="1.200"/></svg>
<svg class="a" style="left:1724px;top:101px" width="15" height="15" viewBox="0 0 15 15"><rect x="5.500" y="0.500" width="9" height="9" fill="#f0f0f4" stroke="#3c3c3c" stroke-width="1"/><rect x="0.500" y="3.500" width="9" height="9" fill="#f0f0f4" stroke="#3c3c3c" stroke-width="1"/><rect x="3.500" y="2.500" width="7" height="11.500" fill="#e4e4ea" stroke="#3c3c3c" stroke-width="1"/></svg>
<div class="a" style="left:1745px;top:98px;width:1px;height:20px;background:#cccedb;"></div>
<svg class="a" style="left:1756px;top:104px" width="11" height="7" viewBox="0 0 11 7"><path d="M3.500 0.500l-3 3 3 3M7.500 0.500l3 3-3 3" fill="none" stroke="#3c3c3c" stroke-width="1.100"/></svg>
<svg class="a" style="left:1776px;top:100px" width="15" height="16" viewBox="0 0 15 16"><path d="M1.500 14.500l7-7" stroke="#3c3c3c" stroke-width="2" stroke-linecap="round"/><path d="M13.800 3.500l-2.300 2.300-2.300-0.500-0.500-2.300 2.300-2.300c-3-0.700-5.300 2-4.300 4.800l1.500 1.500c2.800 1 5.500-1.300 4.800-4.300z" fill="#3c3c3c" transform="translate(0,0.500)"/></svg>
<div class="a" style="left:1794px;top:96px;width:23px;height:24px;background:#e0eefa;border:1px solid #5ca7e4;"></div>
<svg class="a" style="left:1798px;top:101px" width="16" height="14" viewBox="0 0 16 14"><rect x="1.500" y="7.500" width="9" height="3" fill="#f5f5f5" stroke="#1e1e1e" stroke-width="1.200"/><path d="M0 10.500h14" stroke="#1e1e1e" stroke-width="1.200"/><path d="M10 2l1 1M13 1.500l-1 1.500M12.500 6h1.500M13.500 8.500l1 0.500" stroke="#c27d1a" stroke-width="1"/></svg>
<div class="a" style="left:1541px;top:122px;width:345px;height:21px;background:#ffffff;border:1px solid #cccedb;border-left:none;border-right:none;"></div>
<div class="t" style="left:1546.5px;top:125px;color:#6d6d6d;letter-spacing:-0.026px;">Обозреватель решений — поиск (Ctrl+ж)</div>
<svg class="a" style="left:1858px;top:126px" width="13" height="13" viewBox="0 0 13 13"><circle cx="8" cy="4.800" r="3.300" fill="none" stroke="#5a5a5a" stroke-width="1.600"/><path d="M5.700 7.300L1.500 11.500" stroke="#5a5a5a" stroke-width="2"/></svg>
<svg class="a" style="left:1877.0px;top:131.0px" width="6" height="4"><path d="M0 0h6l-3.0 3.0z" fill="#6b6b6b"/></svg>
<div class="a" style="left:1541px;top:164px;width:345px;height:19px;background:#cccedb;"></div>
<svg class="a" style="left:1556px;top:147.5px" width="17" height="15" viewBox="0 0 17 15"><path d="M4 12.500h-3.500v-12h14v6" fill="none" stroke="#424242" stroke-width="1.100"/><path d="M0.500 2.500h14" stroke="#424242" stroke-width="1.500"/><path transform="translate(5.5,5.5) scale(0.475)" fill-rule="evenodd" d="M0 6L3.500 3 8.750 6.200 15 0 20 2.500V17L15 19.500 8.750 13.800 3.500 17 0 14zM3 7.600V12.400L5.600 10zM15.300 6V14L10.800 10z" fill="#68217a"/></svg>
<svg class="a" style="left:1551px;top:171px" width="7" height="7" viewBox="0 0 7 7"><path d="M6.500 0.500v6h-6z" fill="#1e1e1e"/></svg>
<svg class="a" style="left:1574px;top:168px" width="14" height="12" viewBox="0 0 14 12"><rect x="0.500" y="0.500" width="13" height="11" fill="#f8dfe1" stroke="#424242"/><path d="M4 1.800v5M1.500 4.300h5M9 5.300v5M6.500 7.800h5" stroke="#c4262e" stroke-width="1.200"/></svg>
<svg class="a" style="left:1569px;top:188px" width="6" height="10" viewBox="0 0 6 10"><path d="M0.600 0.800v8.400l4.600-4.200z" fill="none" stroke="#1e1e1e" stroke-width="1.100"/></svg>
<svg class="a" style="left:1569px;top:207px" width="6" height="10" viewBox="0 0 6 10"><path d="M0.600 0.800v8.400l4.600-4.200z" fill="none" stroke="#1e1e1e" stroke-width="1.100"/></svg>
<svg class="a" style="left:1569px;top:226px" width="6" height="10" viewBox="0 0 6 10"><path d="M0.600 0.800v8.400l4.600-4.200z" fill="none" stroke="#1e1e1e" stroke-width="1.100"/></svg>
<svg class="a" style="left:1591px;top:189px" width="16" height="8" viewBox="0 0 16 8"><rect x="0.500" y="2" width="4" height="4" fill="none" stroke="#1e1e1e" stroke-width="1.100"/><path d="M4.500 4h5" stroke="#1e1e1e" stroke-width="1.100"/><rect x="9.500" y="1" width="6" height="6" fill="#f5f5f5" stroke="#1e1e1e" stroke-width="1.100"/></svg>
<svg class="a" style="left:1592px;top:206px" width="16" height="15" viewBox="0 0 16 15"><path d="M1.500 5v-3.500h4.500l1.500 1.500h7v9h-6" fill="none" stroke="#c79a2f" stroke-width="1.100"/><rect x="1" y="7" width="7" height="7" fill="#f5f5f5" stroke="#1e1e1e" stroke-width="1.200"/><path d="M3 12l3-3M3.500 9h2.500v2.500" fill="none" stroke="#1e1e1e" stroke-width="1"/></svg>
<svg class="a" style="left:1592px;top:224px" width="16" height="16" viewBox="0 0 16 16"><path d="M0.500 1.500h5l1.500 1.500h6.500v3M0.500 1.500v9.500h6" fill="none" stroke="#c79a2f" stroke-width="1.100"/><path d="M6 7.500h9l-3 3.500v4.500h-3v-4.500z" fill="#cfe6fb" stroke="#1a73c8" stroke-width="1.200" stroke-linejoin="round"/></svg>
<svg class="a" style="left:1592px;top:243px" width="16" height="16" viewBox="0 0 16 16"><path d="M0.500 1.500h5l1.500 1.500h6.500v3M0.500 1.500v9.500h6" fill="none" stroke="#c79a2f" stroke-width="1.100"/><path d="M6 7.500h9l-3 3.500v4.500h-3v-4.500z" fill="#cfe6fb" stroke="#1a73c8" stroke-width="1.200" stroke-linejoin="round"/></svg>
<svg class="a" style="left:1592px;top:262px" width="16" height="16" viewBox="0 0 16 16"><path d="M0.500 1.500h5l1.500 1.500h6.500v3M0.500 1.500v9.500h6" fill="none" stroke="#c79a2f" stroke-width="1.100"/><path d="M6 7.500h9l-3 3.500v4.500h-3v-4.500z" fill="#cfe6fb" stroke="#1a73c8" stroke-width="1.200" stroke-linejoin="round"/></svg>
<div class="t" style="left:1577px;top:146.5px;color:#1e1e1e;letter-spacing:-0.055px;">Решение "ConsoleApplication18" (проекты: 1 из 1)</div>
<div class="t" style="left:1594.2px;top:165.5px;color:#1e1e1e;font-weight:bold;letter-spacing:-0.352px;">ConsoleApplication18</div>
<div class="t" style="left:1612.6px;top:185px;color:#1e1e1e;letter-spacing:-0.042px;">Ссылки</div>
<div class="t" style="left:1612.6px;top:204px;color:#1e1e1e;letter-spacing:-0.056px;">Внешние зависимости</div>
<div class="t" style="left:1612.6px;top:223px;color:#1e1e1e;letter-spacing:-0.146px;">Исходные файлы</div>
<div class="t" style="left:1612.6px;top:242px;color:#1e1e1e;letter-spacing:-0.061px;">Файлы заголовков</div>
<div class="t" style="left:1612.6px;top:261px;color:#1e1e1e;letter-spacing:-0.109px;">Файлы ресурсов</div>
<div class="t" style="left:1754.5px;top:617.5px;color:#444;letter-spacing:-0.115px;">Git</div>
<div class="a" style="left:1540px;top:644px;width:347px;height:406px;background:#f5f5f5;border:1px solid #cccedb;"></div>
<div class="a" style="left:1541px;top:645px;width:345px;height:22px;background:#eeeef2;"></div>
<div class="a" style="left:1560px;top:652px;width:273px;height:5px;background-image:radial-gradient(circle at 0.5px 0.5px,#a0a3b4 0.6px,transparent 0.7px),radial-gradient(circle at 0.5px 0.5px,#a0a3b4 0.6px,transparent 0.7px);background-size:4px 4px;background-position:0 0,2px 2px"></div>
<svg class="a" style="left:1839.0px;top:652.5px" width="8" height="4"><path d="M0 0h8l-4.0 4.0z" fill="#1e1e1e"/></svg>
<svg class="a" style="left:1856px;top:649px" width="8" height="11" viewBox="0 0 8 11"><path d="M1.500 0.500h5M2.500 0.500v6M5.500 0.500v6M6 0.500v6M0 6.500h8M4 7v4" fill="none" stroke="#1e1e1e" stroke-width="1"/></svg>
<svg class="a" style="left:1871px;top:649px" width="10" height="10" viewBox="0 0 10 10"><path d="M0.500 0.500l9 9M9.500 0.500l-9 9" stroke="#1e1e1e" stroke-width="1.500" fill="none"/></svg>
<div class="a" style="left:1541px;top:666px;width:345px;height:23px;background:#ffffff;"></div>
<svg class="a" style="left:1877.0px;top:676.5px" width="6" height="4"><path d="M0 0h6l-3.0 3.0z" fill="#6b6b6b"/></svg>
<div class="a" style="left:1541px;top:689px;width:345px;height:26px;background:#eeeef2;"></div>
<div class="a" style="left:1541px;top:986px;width:345px;height:1px;background:#eaeaee;"></div>
<div class="vt" style="left:1895px;top:72.5px;color:#444;letter-spacing:-0.161px">Средства диагностики</div>
<div class="a" style="left:1913px;top:72px;width:5px;height:123px;background:#cccedb;"></div>
<div class="a" style="left:1918px;top:0px;width:2px;height:1080px;background:#20381a;"></div>
<div class="a" style="left:770px;top:410px;width:979px;height:512px;background:#0c0c0c;box-shadow:0 3px 12px rgba(0,0,0,.28);border:1px solid #3d6f17"></div>
<div class="a" style="left:770px;top:410px;width:979px;height:31px;background:#478119;"></div>
<svg class="a" style="left:780px;top:419px" width="15" height="12" viewBox="0 0 15 12"><rect x="0.500" y="0.500" width="14" height="11" fill="#5a3a9a" stroke="#b9b3c9" stroke-width="1"/><rect x="1" y="1" width="13" height="1.500" fill="#8d83ad"/></svg>
<div class="t" style="left:782px;top:420px;font:bold 7px/10px &quot;Liberation Mono&quot;,monospace;color:#fff;letter-spacing:-0.600px;height:10px">C:\</div>
<div class="t" style="left:800.5px;top:418px;color:#ffffff;letter-spacing:-0.010px;">Консоль отладки Microsoft Visual Studio</div>
<svg class="a" style="left:1629px;top:425px" width="10" height="1" viewBox="0 0 10 1"><rect width="10" height="1" fill="#fff"/></svg>
<svg class="a" style="left:1674px;top:420px" width="11" height="11" viewBox="0 0 11 11"><rect x="0.500" y="0.500" width="9.500" height="9.500" fill="none" stroke="#fff" stroke-width="1"/></svg>
<svg class="a" style="left:1720px;top:420px" width="11" height="11" viewBox="0 0 11 11"><path d="M0.500 0.500l10 10M10.500 0.500l-10 10" stroke="#fff" stroke-width="1.100" fill="none"/></svg>
<div class="a" style="left:1731px;top:441px;width:17px;height:480px;background:#f0f0f0;"></div>
<div class="a" style="left:1731px;top:459px;width:17px;height:16px;background:#cdcdcd;"></div>
<svg class="a" style="left:1735px;top:447px" width="9" height="6" viewBox="0 0 9 6"><path d="M0.700 5l3.800-3.800 3.800 3.800" fill="none" stroke="#606060" stroke-width="1.500"/></svg>
<svg class="a" style="left:1735px;top:910px" width="9" height="6" viewBox="0 0 9 6"><path d="M0.700 1l3.800 3.800 3.800-3.800" fill="none" stroke="#606060" stroke-width="1.500"/></svg>
<div class="con" style="top:443px">10345</div>
<div class="con" style="top:459px">5</div>
<div class="con" style="top:475px">4</div>
<div class="con" style="top:491px">3</div>
<div class="con" style="top:507px">0</div>
<div class="con" style="top:523px">1</div>
<div class="con" style="top:555px">C:\Users\mahne\source\repos\ConsoleApplication18\x64\Debug\ConsoleApplication18.exe (процесс 22792) завершил работу с ко</div>
<div class="con" style="top:571px">дом 0.</div>
<div class="con" style="top:587px">Чтобы автоматически закрывать консоль при остановке отладки, включите параметр "Сервис" -&gt;"Параметры" -&gt;"Отладка" -&gt; "Ав</div>
<div class="con" style="top:603px">томатически закрыть консоль при остановке отладки".</div>
<div class="con" style="top:619px">Нажмите любую клавишу, чтобы закрыть это окно:</div>
</body></html>
